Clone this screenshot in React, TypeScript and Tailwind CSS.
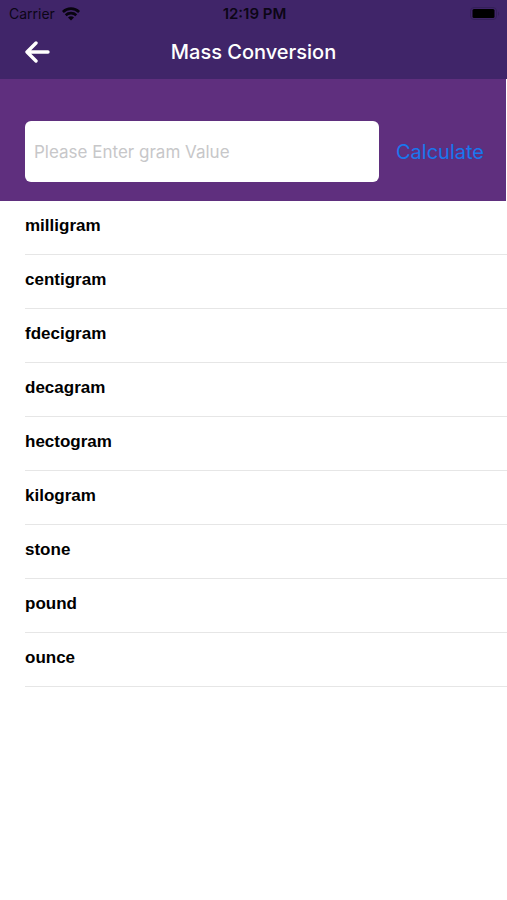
import { useState } from 'react'

const units = [
  'milligram',
  'centigram',
  'fdecigram',
  'decagram',
  'hectogram',
  'kilogram',
  'stone',
  'pound',
  'ounce',
]

function WifiIcon() {
  return (
    <svg className="w-[18px] h-[14px]" viewBox="0 0 18 14" fill="none" stroke="#08040f" strokeWidth="2.6" aria-hidden="true">
      <path d="M0.9 5C5.4 0.5 12.6 0.5 17.1 5" />
      <path d="M3.7 8.2C6.6 5.4 11.4 5.4 14.3 8.2" />
      <path d="M6 10.4C7.7 8.8 10.3 8.8 12 10.4L9 13.5Z" fill="#08040f" stroke="none" />
    </svg>
  )
}

function BatteryIcon() {
  return (
    <svg className="w-[30px] h-[14px]" viewBox="0 0 30 14" aria-hidden="true">
      <rect x="0.5" y="0.5" width="26" height="12" rx="3.5" fill="none" stroke="#342059" />
      <rect x="2.5" y="2" width="22" height="9" rx="1.5" fill="#000" />
      <path d="M28 4.5C29.6 5.2 29.6 8.3 28 9Z" fill="#342059" />
    </svg>
  )
}

function StatusBar() {
  return (
    <div className="grid grid-cols-[1fr_auto_1fr] items-center h-7 pl-[9px] pr-[7px] text-[#0c0616]">
      <div className="flex items-center gap-[7px] text-sm">
        <span>Carrier</span>
        <WifiIcon />
      </div>
      <span className="text-[15px] font-semibold">12:19 PM</span>
      <div className="flex justify-end">
        <BatteryIcon />
      </div>
    </div>
  )
}

function NavBar() {
  return (
    <div className="grid grid-cols-[1fr_auto_1fr] items-center h-[51px] px-[25px] pb-1">
      <button type="button" aria-label="Back" className="justify-self-start">
        <svg className="w-[25px] h-[22px]" viewBox="0 0 25 22" fill="none" stroke="#fff" strokeWidth="3.4" strokeLinecap="round" strokeLinejoin="round" aria-hidden="true">
          <path d="M23 11H2.5M11 2L2 11L11 20" />
        </svg>
      </button>
      <h1 className="text-xl font-medium text-white">Mass Conversion</h1>
    </div>
  )
}

export default function App() {
  const [value, setValue] = useState('')

  return (
    <div className="min-h-screen bg-white font-['Inter',sans-serif]">
      <header className="bg-[#402569]">
        <StatusBar />
        <NavBar />
      </header>

      {/* Value entry */}
      <form
        className="flex items-center gap-[17px] mr-px bg-[#5f2f7e] pt-[42px] pb-[19px] pl-[25px] pr-[22px]"
        onSubmit={(e) => e.preventDefault()}
      >
        <input
          type="text"
          inputMode="decimal"
          aria-label="Gram value"
          placeholder="Please Enter gram Value"
          value={value}
          onChange={(e) => setValue(e.target.value)}
          className="flex-1 min-w-0 h-[61px] px-[9px] rounded-md bg-white text-[17px] text-black placeholder:text-[#c7c7c9] outline-none"
        />
        <button type="submit" className="text-xl text-[#1877ee]">
          Calculate
        </button>
      </form>

      {/* Units */}
      <ul className="pl-[25px] font-['Liberation_Sans',sans-serif]">
        {units.map((unit) => (
          <li
            key={unit}
            className="flex items-center h-[54px] pb-[3px] border-b border-[#e6e6e6] text-[17px] font-bold text-black"
          >
            {unit}
          </li>
        ))}
      </ul>
    </div>
  )
}
